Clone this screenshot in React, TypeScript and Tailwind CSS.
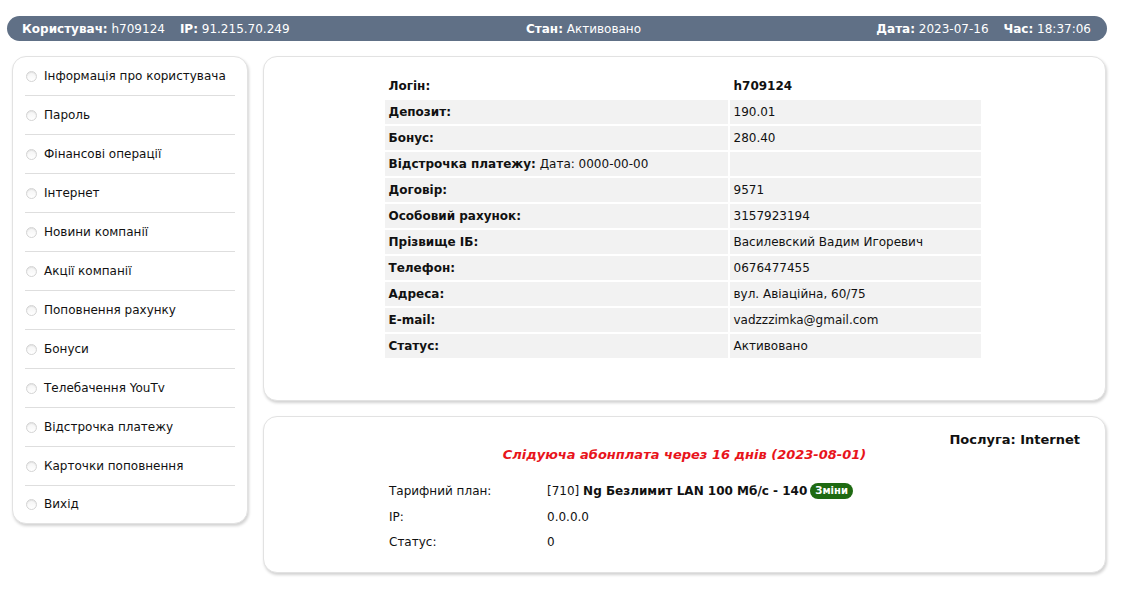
import React from 'react';

const menu = [
  'Інформація про користувача',
  'Пароль',
  'Фінансові операції',
  'Інтернет',
  'Новини компанії',
  'Акції компанії',
  'Поповнення рахунку',
  'Бонуси',
  'Телебачення YouTv',
  'Відстрочка платежу',
  'Карточки поповнення',
  'Вихід',
];

const info: [string, React.ReactNode][] = [
  ['Депозит:', '190.01'],
  ['Бонус:', '280.40'],
  ['__defer', ''],
  ['Договір:', '9571'],
  ['Особовий рахунок:', '3157923194'],
  ['Прізвище ІБ:', 'Василевский Вадим Игоревич'],
  ['Телефон:', '0676477455'],
  ['Адреса:', 'вул. Авіаційна, 60/75'],
  ['E-mail:', 'vadzzzimka@gmail.com'],
  ['Статус:', 'Активовано'],
];

function Radio() {
  return (
    <span className="inline-block h-[11px] w-[11px] shrink-0 rounded-full border border-[#d4d4d4] bg-gradient-to-b from-[#f4f4f4] to-white shadow-[inset_0_1px_1px_rgba(0,0,0,0.08)]" />
  );
}

function Panel({ children, className = '' }: { children: React.ReactNode; className?: string }) {
  return (
    <div
      className={`rounded-[14px] border border-[#e2e2e2] bg-white shadow-[1px_2px_3px_rgba(0,0,0,0.18)] ${className}`}
    >
      {children}
    </div>
  );
}

export default function App() {
  return (
    <div className="min-h-[592px] bg-white font-['DejaVu_Sans',Verdana,sans-serif] text-[12px] text-[#111]">
      <div className="pl-[7px] pr-[18px] pt-[16px]">
        <div className="flex h-[25px] items-center rounded-full bg-[#607086] pl-[15px] pr-[16px] text-[12px] text-white">
          <div className="w-[430px]">
            <b>Користувач:</b> h709124
            <span className="ml-[15px]">
              <b>IP:</b> 91.215.70.249
            </span>
          </div>
          <div className="flex-1 pl-[74px]">
            <b>Стан:</b> Активовано
          </div>
          <div className="text-right">
            <b>Дата:</b> 2023-07-16
            <span className="ml-[15px]">
              <b>Час:</b> 18:37:06
            </span>
          </div>
        </div>
      </div>

      <div className="flex gap-[15px] pl-[12px] pr-[19px] pt-[15px]">
        <Panel className="w-[236px] self-start px-[12px] pb-[1px]">
          {menu.map((m, i) => (
            <div
              key={m}
              className={`flex items-center gap-[7px] pl-[1px] ${i < menu.length - 1 ? 'h-[39px] border-b border-[#dedede]' : 'h-[36px]'}`}
            >
              <Radio />
              <span>{m}</span>
            </div>
          ))}
        </Panel>

        <div className="flex flex-1 flex-col gap-[15px]">
          <Panel className="flex h-[345px] justify-center pt-[15px]">
            <table className="mr-[4px] w-[600px] border-separate border-spacing-[2px] self-start">
              <tbody>
                <tr className="h-[24px]">
                  <td className="w-[343px] px-[4px] font-bold">Логін:</td>
                  <td className="px-[4px] font-bold">h709124</td>
                </tr>
                {info.map(([k, v]) => (
                  <tr key={k} className="h-[24px] bg-[#f2f2f2]">
                    {k === '__defer' ? (
                      <td className="px-[4px]">
                        <b>Відстрочка платежу:</b> Дата: 0000-00-00
                      </td>
                    ) : (
                      <td className="px-[4px] font-bold">{k}</td>
                    )}
                    <td className="px-[4px]">{v}</td>
                  </tr>
                ))}
              </tbody>
            </table>
          </Panel>

          <Panel className="h-[157px] px-[25px] pt-[15px]">
            <div className="text-right text-[13px] font-bold leading-[15px]">Послуга: Internet</div>
            <div className="text-center text-[13px] font-bold italic leading-[15px] text-[#e8141b]">
              Слідуюча абонплата через 16 днів (2023-08-01)
            </div>
            <div className="mt-[16px] pl-[100px]">
              <div className="flex h-[26px] items-center">
                <span className="w-[158px]">Тарифний план:</span>
                <span>
                  [710] <b>Ng Безлимит LAN 100 Мб/с - 140</b>
                </span>
                <span className="ml-[3px] rounded-full bg-[#1e6a12] px-[5px] py-[2px] text-[10px] font-bold leading-[12px] text-white">
                  Зміни
                </span>
              </div>
              <div className="flex h-[25px] items-center">
                <span className="w-[158px]">IP:</span>
                <span>0.0.0.0</span>
              </div>
              <div className="flex h-[26px] items-center">
                <span className="w-[158px]">Статус:</span>
                <span>0</span>
              </div>
            </div>
          </Panel>
        </div>
      </div>
    </div>
  );
}
